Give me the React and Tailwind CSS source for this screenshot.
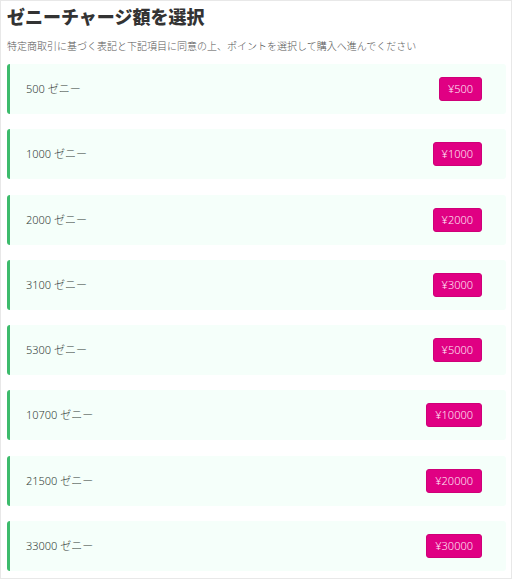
const plans = [
  { points: 500, price: 500 },
  { points: 1000, price: 1000 },
  { points: 2000, price: 2000 },
  { points: 3100, price: 3000 },
  { points: 5300, price: 5000 },
  { points: 10700, price: 10000 },
  { points: 21500, price: 20000 },
  { points: 33000, price: 30000 },
];

function PlanRow({ points, price }) {
  return (
    <li className="flex h-[50px] items-center justify-between rounded-[3px] border-l-[3px] border-[#3dbb6c] bg-[#f5fffa] pr-6 pl-4">
      <span className="text-[11px] leading-4 text-[#333d38]">{points} ゼニー</span>
      <button
        type="button"
        aria-label={`${points} ゼニーを${price}円で購入`}
        className="h-6 rounded-[3px] border border-[#cf0078] bg-[#e00083] px-2 text-[11px] leading-4 text-[#ffe6f5]"
      >
        ¥{price}
      </button>
    </li>
  );
}

export default function App() {
  return (
    <main className="flex min-h-screen flex-col border border-[#e8e8e8] bg-white pt-1 pr-[5px] pb-[7px] pl-[6px] font-['Noto_Sans','Noto_Sans_CJK_JP',sans-serif] font-light">
      <h1 className="text-[18px] leading-6 font-black text-[#333333]">ゼニーチャージ額を選択</h1>
      <p className="mt-[9px] text-[10px] leading-4 text-[#555555]">
        特定商取引に基づく表記と下記項目に同意の上、ポイントを選択して購入へ進んでください
      </p>
      <ul className="mt-[10px] flex flex-1 flex-col justify-between">
        {plans.map((plan) => (
          <PlanRow key={plan.points} {...plan} />
        ))}
      </ul>
    </main>
  );
}
